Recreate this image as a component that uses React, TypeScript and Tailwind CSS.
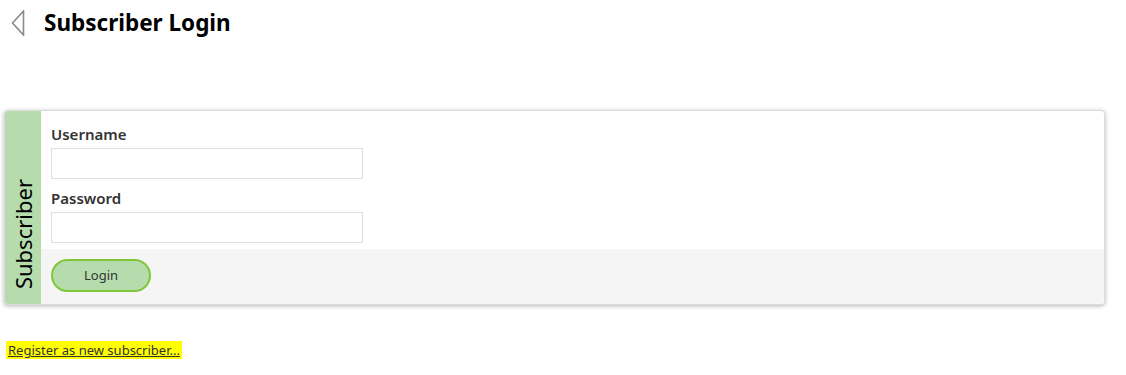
export default function App() {
  return (
    <div className="min-h-[375px] bg-white font-['Noto_Sans','Open_Sans',sans-serif] text-[#333]">
      <header className="flex h-[46px] items-center">
        <button className="ml-[11px] mr-[19px] flex h-[26px] w-[14px] items-center justify-center">
          <svg width="14" height="26" viewBox="0 0 14 26" fill="none">
            <path d="M12.5 1 L1.5 13 L12.5 25 Z" stroke="#8a8a8a" strokeWidth="1.6" strokeLinejoin="miter" />
          </svg>
        </button>
        <h1 className="text-[22.5px] font-bold leading-none text-black">Subscriber Login</h1>
      </header>

      <section className="mx-[4px] mt-[64px] mr-[21px] flex overflow-hidden rounded-[4px] border border-[#dcdcdc] bg-white shadow-[0_1px_4px_rgba(0,0,0,0.3)]">
        <div className="flex w-[36px] shrink-0 items-end justify-center bg-[#b6dcae] pb-[15px]">
          <span className="text-[22px] leading-none text-black [writing-mode:vertical-rl] rotate-180">
            Subscriber
          </span>
        </div>
        <div className="flex-1">
          <div className="flex flex-col px-[10px] pt-[13px] pb-[6px]">
            <label className="text-[15px] font-semibold leading-[20px]">Username</label>
            <input className="mt-[4px] h-[31px] w-[312px] border border-[#dedede] bg-white px-2 text-sm outline-none" />
            <label className="mt-[9px] text-[15px] font-semibold leading-[20px]">Password</label>
            <input type="password" className="mt-[4px] h-[31px] w-[312px] border border-[#dedede] bg-white px-2 text-sm outline-none" />
          </div>
          <div className="bg-[#f5f5f5] px-[10px] pt-[10px] pb-[12px]">
            <button className="h-[33px] w-[100px] rounded-full border-2 border-[#80c63a] bg-[#b6dcae] text-[13px] text-[#333]">
              Login
            </button>
          </div>
        </div>
      </section>

      <div className="mt-[32px] pl-[6px]">
        <a href="#" className="bg-[#ffff00] px-[2px] text-[13px] text-[#333] underline">
          Register as new subscriber...
        </a>
      </div>
    </div>
  )
}
